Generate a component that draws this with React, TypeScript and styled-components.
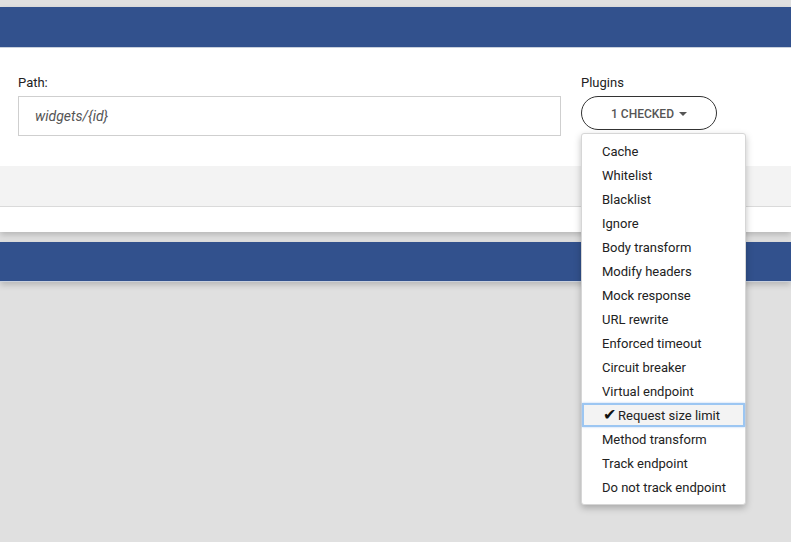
import React from "react";
import styled, { createGlobalStyle } from "styled-components";

const GlobalStyle = createGlobalStyle`
  html, body { margin: 0; padding: 0; background: #e0e0e0; }
  body { font-family: Roboto, "Liberation Sans", Arial, sans-serif; }
`;

const Page = styled.div`
  padding-top: 7px;
  min-height: 535px;
`;

const Card = styled.section<{ $gap?: number }>`
  background: #fff;
  box-shadow: 0 3px 6px rgba(0, 0, 0, 0.18);
  margin-bottom: ${(p) => p.$gap ?? 0}px;
`;

const Header = styled.div<{ $h: number }>`
  height: ${(p) => p.$h}px;
  background: #32518d;
  border-bottom: 1px solid #c9d0dc;
`;

const FormRow = styled.div`
  display: flex;
  align-items: flex-start;
  gap: 20px;
  padding: 27px 18px 30px 18px;
`;

const Field = styled.div<{ $w: number }>`
  position: relative;
  flex: 0 0 ${(p) => p.$w}px;
  display: flex;
  flex-direction: column;
`;

const Label = styled.label`
  font-size: 13px;
  line-height: 15px;
  color: #222;
  margin-bottom: 6px;
`;

const TextInput = styled.div`
  box-sizing: border-box;
  height: 40px;
  border: 1px solid #cfcfcf;
  padding: 0 16px;
  display: flex;
  align-items: center;
  font-size: 14px;
  font-style: italic;
  color: #555;
`;

const PillButton = styled.button`
  box-sizing: border-box;
  width: 136px;
  height: 34px;
  border: 1px solid #333;
  border-radius: 17px;
  background: #fff;
  font-family: inherit;
  font-size: 12px;
  font-weight: 500;
  color: #555;
  text-transform: uppercase;
  display: flex;
  align-items: center;
  justify-content: center;
  gap: 5px;
  padding: 1px 0 0 0;
`;

const Caret = styled.span`
  width: 0;
  height: 0;
  border-left: 4px solid transparent;
  border-right: 4px solid transparent;
  border-top: 4px solid #555;
`;

const Menu = styled.ul`
  position: absolute;
  top: 58px;
  left: 0;
  width: 165px;
  box-sizing: border-box;
  margin: 0;
  padding: 5px 0;
  list-style: none;
  background: #fff;
  border: 1px solid #d6d6d6;
  border-radius: 3px;
  box-shadow: 0 3px 7px rgba(0, 0, 0, 0.25);
  z-index: 10;
`;

const Item = styled.li<{ $active?: boolean }>`
  box-sizing: border-box;
  height: 24px;
  display: flex;
  align-items: center;
  padding-left: ${(p) => (p.$active ? 19 : 20)}px;
  font-size: 13px;
  color: #222;
  white-space: nowrap;
  background: ${(p) => (p.$active ? "#f3f3f3" : "transparent")};
  border: ${(p) => (p.$active ? "2px solid #9cc6f2" : "none")};
  box-shadow: ${(p) => (p.$active ? "0 0 2px rgba(100, 160, 230, 0.5)" : "none")};
`;

const Check = styled.span`
  font-size: 16px;
  line-height: 16px;
  margin-right: 2px;
  color: #111;
`;

const GrayRow = styled.div`
  height: 40px;
  background: #f3f3f3;
  border-bottom: 1px solid #dadada;
`;

const Footer = styled.div`
  height: 25px;
`;

const plugins = [
  "Cache",
  "Whitelist",
  "Blacklist",
  "Ignore",
  "Body transform",
  "Modify headers",
  "Mock response",
  "URL rewrite",
  "Enforced timeout",
  "Circuit breaker",
  "Virtual endpoint",
  "Request size limit",
  "Method transform",
  "Track endpoint",
  "Do not track endpoint",
];

export default function App() {
  return (
    <>
      <GlobalStyle />
      <Page>
        <Card $gap={10}>
          <Header $h={40} />
          <FormRow>
            <Field $w={543}>
              <Label>Path:</Label>
              <TextInput>widgets/{"{id}"}</TextInput>
            </Field>
            <Field $w={165}>
              <Label>Plugins</Label>
              <PillButton>
                1 checked <Caret />
              </PillButton>
              <Menu>
                {plugins.map((p) => {
                  const active = p === "Request size limit";
                  return (
                    <Item key={p} $active={active}>
                      {active && <Check>✔</Check>}
                      {p}
                    </Item>
                  );
                })}
              </Menu>
            </Field>
          </FormRow>
          <GrayRow />
          <Footer />
        </Card>
        <Card>
          <Header $h={39} />
        </Card>
      </Page>
    </>
  );
}
